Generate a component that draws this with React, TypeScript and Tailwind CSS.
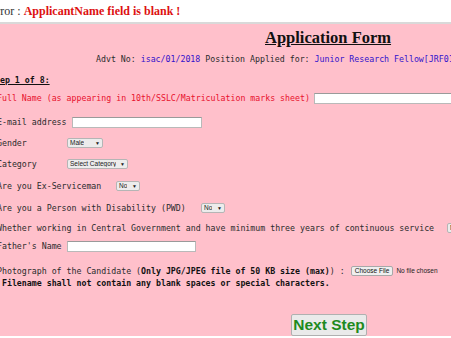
import React from "react";

const mono = { fontFamily: '"DejaVu Sans Mono", monospace' };

function Sel({ w, label }: { w: number; label: string }) {
  return (
    <span
      className="shrink-0 inline-flex items-center justify-between h-[10px] bg-[#ececec] border border-[#b5b5b5] rounded-[2px] px-[2px] text-[6.5px] leading-none text-[#222]"
      style={{ width: w, fontFamily: '"Liberation Sans", Arial, sans-serif' }}
    >
      <span className="truncate">{label}</span>
      <span className="text-[5px] ml-[2px]">▼</span>
    </span>
  );
}

function Inp({ w }: { w: number }) {
  return (
    <span
      className="shrink-0 inline-block h-[11px] bg-white border border-[#b9b9b9] border-t-[#9a9a9a]"
      style={{ width: w }}
    />
  );
}

export default function App() {
  return (
    <div className="w-[451px] h-[338px] overflow-hidden bg-white relative">
      {/* error bar */}
      <div className="h-[22px] flex items-center">
        <div
          className="ml-[-11px] shrink-0 whitespace-nowrap text-[12px] leading-none"
          style={{ fontFamily: '"Liberation Serif", "Times New Roman", serif' }}
        >
          <span className="text-[#333]">Error : </span>
          <span className="text-[#dd1111] font-bold">ApplicantName field is blank !</span>
        </div>
      </div>
      <div className="h-[2px] bg-[#d9d9d9]" />
      <div
        className="h-[312px] bg-[#ffc0cb] flex flex-col text-[8.25px] text-[#2b2b2b] whitespace-nowrap"
        style={mono}
      >
        <div
          className="mt-[4px] h-[19px] leading-[19px] ml-[265px] text-[16.5px] font-bold underline text-[#111]"
          style={{ fontFamily: '"Liberation Serif", "Times New Roman", serif' }}
        >
          Application Form
        </div>
        <div className="mt-[6px] h-[12px] flex items-center ml-[96px]">
          <span className="shrink-0">
            Advt No:&nbsp;<span className="text-[#3311cc]">isac/01/2018</span>&nbsp;Position Applied for:&nbsp;
            <span className="text-[#3311cc]">Junior Research Fellow[JRF01]</span>
          </span>
        </div>
        <div className="mt-[9px] h-[12px] flex items-center ml-[-10px] font-bold underline text-[#111]">
          <span className="shrink-0">Step 1 of 8:</span>
        </div>
        <div className="mt-[6px] h-[12px] flex items-center ml-[-3px]">
          <span className="shrink-0 text-[#e8112d]">
            Full Name (as appearing in 10th/SSLC/Matriculation marks sheet)
          </span>
          <span className="ml-[4px] flex shrink-0">
            <Inp w={160} />
          </span>
        </div>
        <div className="mt-[12px] h-[12px] flex items-center ml-[-3px]">
          <span className="shrink-0">E-mail address</span>
          <span className="ml-[5px] flex shrink-0">
            <Inp w={130} />
          </span>
        </div>
        <div className="mt-[9px] h-[12px] flex items-center ml-[-3px]">
          <span className="w-[70px] shrink-0">Gender</span>
          <Sel w={36} label="Male" />
        </div>
        <div className="mt-[9px] h-[12px] flex items-center ml-[-3px]">
          <span className="w-[70px] shrink-0">Category</span>
          <Sel w={61} label="Select Category" />
        </div>
        <div className="mt-[10px] h-[12px] flex items-center ml-[-3px]">
          <span className="w-[119px] shrink-0">Are you Ex-Serviceman</span>
          <Sel w={24} label="No" />
        </div>
        <div className="mt-[10px] h-[12px] flex items-center ml-[-3px]">
          <span className="w-[204px] shrink-0">Are you a Person with Disability (PWD)</span>
          <Sel w={24} label="No" />
        </div>
        <div className="mt-[8px] h-[12px] flex items-center ml-[-3px]">
          <span className="w-[450px] shrink-0">
            Whether working in Central Government and have minimum three years of continuous service
          </span>
          <Sel w={24} label="No" />
        </div>
        <div className="mt-[6px] h-[12px] flex items-center ml-[-3px]">
          <span className="w-[70px] shrink-0">Father's Name</span>
          <span className="flex shrink-0">
            <Inp w={129} />
          </span>
        </div>
        <div className="mt-[13px] h-[12px] flex items-center ml-[-3px]">
          <span className="shrink-0">
            Photograph of the Candidate (<b className="text-[#111]">Only JPG/JPEG file of 50 KB size (max)</b>) :
          </span>
          <span
            className="shrink-0 ml-[6px] inline-flex items-center h-[10px] px-[3px] bg-[#efefef] border border-[#a8a8a8] rounded-[2px] text-[6.5px] leading-none text-[#111]"
            style={{ fontFamily: '"Liberation Sans", Arial, sans-serif' }}
          >
            Choose File
          </span>
          <span
            className="shrink-0 ml-[3px] text-[6.5px] text-[#222]"
            style={{ fontFamily: '"Liberation Sans", Arial, sans-serif' }}
          >
            No file chosen
          </span>
        </div>
        <div className="h-[12px] flex items-center ml-[-3px] font-bold text-[#111]">
          <span className="shrink-0">&nbsp;Filename shall not contain any blank spaces or special characters.</span>
        </div>
        <div className="mt-[25px] ml-[291px]">
          <span
            className="inline-flex items-center justify-center w-[76px] h-[22px] bg-[#eaeaea] border border-[#b0b0b0] rounded-[2px] text-[15.5px] font-bold text-[#1e8a1e] leading-none"
            style={{ fontFamily: '"Liberation Sans", Arial, sans-serif' }}
          >
            Next Step
          </span>
        </div>
      </div>
    </div>
  );
}
